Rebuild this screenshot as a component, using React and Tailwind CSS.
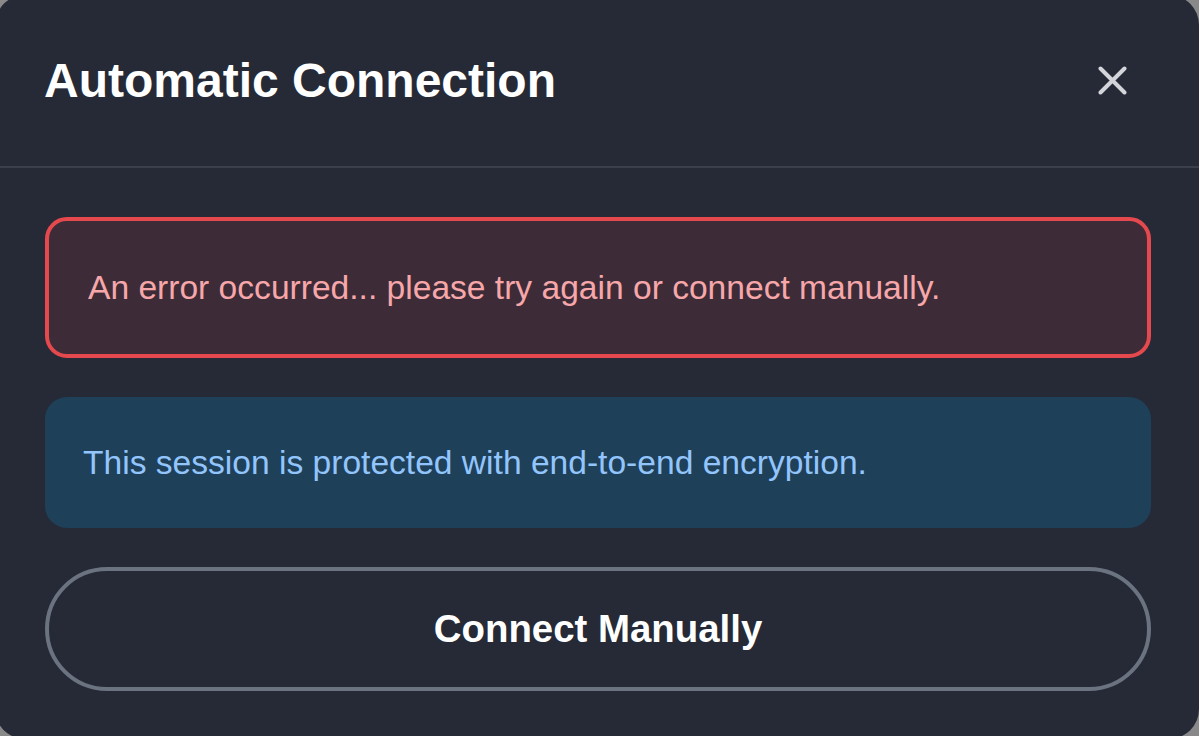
import React from 'react';

const App = () => {
    return (
        <div className="w-[1199px] h-[736px] overflow-hidden bg-[#898989] font-['Liberation_Sans',Arial,sans-serif]">
            {/* Dialog */}
            <div className="-ml-[5px] -mt-[5px] w-[1204px] h-[744px] rounded-[30px] bg-[#252a36] flex flex-col">
                {/* Header */}
                <div className="h-[171px] flex items-center justify-between pl-[49px] pr-[72px]">
                    <h2 className="text-[48px] leading-none font-bold text-white">Automatic Connection</h2>
                    <button className="w-[29px] h-[29px] text-[#d3d5da]" title="Close">
                        <svg width="29" height="29" viewBox="0 0 29 29" fill="none" stroke="currentColor" strokeWidth={4} strokeLinecap="round">
                            <path d="M2.5 2.5l24 24M26.5 2.5l-24 24" />
                        </svg>
                    </button>
                </div>
                <div className="h-[2px] bg-[#3a3f4b]" />

                {/* Body */}
                <div className="pl-[50px] pr-[48px] pt-[49px] flex flex-col gap-[39px]">
                    <div className="h-[141px] rounded-[22px] border-4 border-[#e5484d] bg-[#3d2c37] flex items-center pl-[39px]">
                        <p className="text-[33.6px] leading-none text-[#f7a7aa]">
                            An error occurred... please try again or connect manually.
                        </p>
                    </div>
                    <div className="h-[131px] rounded-[22px] bg-[#1f4059] flex items-center pl-[38px]">
                        <p className="text-[33.6px] leading-none text-[#93c5fd]">
                            This session is protected with end-to-end encryption.
                        </p>
                    </div>
                    <button className="h-[124px] rounded-full border-4 border-[#6b7280] flex items-center justify-center">
                        <span className="text-[38.4px] leading-none font-bold text-white">Connect Manually</span>
                    </button>
                </div>
            </div>
        </div>
    );
};

export default App;
